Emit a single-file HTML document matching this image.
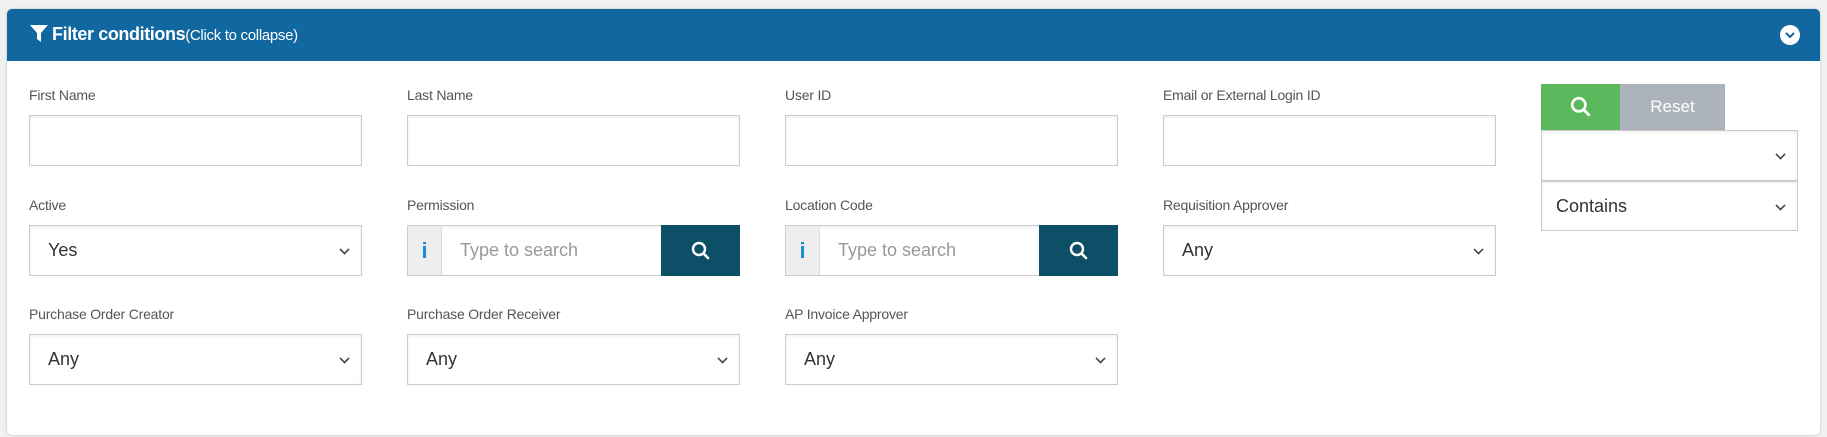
<!DOCTYPE html>
<html><head><meta charset="utf-8"><style>
*{box-sizing:border-box;margin:0;padding:0}
body{width:1827px;height:437px;background:#eef0f2;font-family:"Liberation Sans",sans-serif;position:relative;overflow:hidden}
.panel{position:absolute;left:7px;top:9px;width:1813px;height:426px;background:#fff;border-radius:5px;box-shadow:0 0 2px rgba(0,0,0,.25);overflow:hidden}
.hdr{position:absolute;left:0;top:0;right:0;height:52px;background:#11679f;color:#fff}
.hdr .t{position:absolute;left:45px;top:15px;font-size:18px;font-weight:bold;letter-spacing:-0.4px}
.hdr .t span{font-weight:normal;font-size:15px;letter-spacing:-0.3px}
.lbl{position:absolute;font-size:14px;color:#555;letter-spacing:-0.2px}
.box{position:absolute;height:51px;border:1px solid #ccc;background:#fff;box-shadow:inset 0 1px 3px rgba(0,0,0,.08);font-size:18px;color:#333;padding-left:18px;line-height:49px}
.chev{position:absolute;right:12px;top:19px;width:9px;height:9px;border-right:2px solid #444;border-bottom:2px solid #444;transform:rotate(45deg) scale(.8)}
.info{position:absolute;left:0;top:0;width:34px;height:49px;background:#eee;border-right:1px solid #ddd;color:#1a8fd6;font-weight:bold;font-family:"Liberation Sans",sans-serif;font-size:22px;text-align:center;line-height:49px;padding:0}
.ph{position:absolute;left:52px;top:0;color:#999;font-size:18px}
.sbtn{position:absolute;right:-1px;top:-1px;width:79px;height:51px;background:#0d4f66}
</style></head><body>
<div class="panel">
 <div class="hdr">
  <svg style="position:absolute;left:22px;top:15px" width="20" height="20" viewBox="0 0 20 20"><path d="M1 1H19L12 9V18L8 15V9Z" fill="#fff"/></svg>
  <div class="t">Filter conditions<span>(Click to collapse)</span></div>
  <svg style="position:absolute;left:1773px;top:16px" width="20" height="20" viewBox="0 0 20 20"><circle cx="10" cy="10" r="10" fill="#fff"/><path d="M6 8L10 12L14 8" stroke="#11679f" stroke-width="2" fill="none"/></svg>
 </div>
</div>
<div class="lbl" style="left:29px;top:87px">First Name</div>
<div class="lbl" style="left:407px;top:87px">Last Name</div>
<div class="lbl" style="left:785px;top:87px">User ID</div>
<div class="lbl" style="left:1163px;top:87px">Email or External Login ID</div>
<div class="box" style="left:29px;top:115px;width:333px"></div>
<div class="box" style="left:407px;top:115px;width:333px"></div>
<div class="box" style="left:785px;top:115px;width:333px"></div>
<div class="box" style="left:1163px;top:115px;width:333px"></div>

<div class="lbl" style="left:29px;top:197px">Active</div>
<div class="lbl" style="left:407px;top:197px">Permission</div>
<div class="lbl" style="left:785px;top:197px">Location Code</div>
<div class="lbl" style="left:1163px;top:197px">Requisition Approver</div>
<div class="box" style="left:29px;top:225px;width:333px">Yes<div class="chev"></div></div>
<div class="box" style="left:407px;top:225px;width:333px"><div class="info">i</div><div class="ph">Type to search</div><div class="sbtn"><svg style="position:absolute;left:30px;top:16px" width="20" height="20" viewBox="0 0 20 20"><circle cx="8" cy="8" r="6" stroke="#fff" stroke-width="2.4" fill="none"/><path d="M12.5 12.5L17 17" stroke="#fff" stroke-width="2.6" stroke-linecap="round"/></svg></div></div>
<div class="box" style="left:785px;top:225px;width:333px"><div class="info">i</div><div class="ph">Type to search</div><div class="sbtn"><svg style="position:absolute;left:30px;top:16px" width="20" height="20" viewBox="0 0 20 20"><circle cx="8" cy="8" r="6" stroke="#fff" stroke-width="2.4" fill="none"/><path d="M12.5 12.5L17 17" stroke="#fff" stroke-width="2.6" stroke-linecap="round"/></svg></div></div>
<div class="box" style="left:1163px;top:225px;width:333px">Any<div class="chev"></div></div>

<div class="lbl" style="left:29px;top:306px">Purchase Order Creator</div>
<div class="lbl" style="left:407px;top:306px">Purchase Order Receiver</div>
<div class="lbl" style="left:785px;top:306px">AP Invoice Approver</div>
<div class="box" style="left:29px;top:334px;width:333px">Any<div class="chev"></div></div>
<div class="box" style="left:407px;top:334px;width:333px">Any<div class="chev"></div></div>
<div class="box" style="left:785px;top:334px;width:333px">Any<div class="chev"></div></div>

<div style="position:absolute;left:1541px;top:84px;width:79px;height:46px;background:#5cb85c"><svg style="position:absolute;left:29px;top:12px" width="22" height="22" viewBox="0 0 20 20"><circle cx="8" cy="8" r="6" stroke="#fff" stroke-width="2.4" fill="none"/><path d="M12.5 12.5L17 17" stroke="#fff" stroke-width="2.6" stroke-linecap="round"/></svg></div>
<div style="position:absolute;left:1620px;top:84px;width:105px;height:46px;background:#adb3bb;color:#fff;font-size:17px;text-align:center;line-height:46px">Reset</div>
<div class="box" style="left:1541px;top:130px;width:257px"><div class="chev"></div></div>
<div class="box" style="left:1541px;top:181px;width:257px;height:50px;line-height:48px;padding-left:14px">Contains<div class="chev"></div></div>
</body></html>
